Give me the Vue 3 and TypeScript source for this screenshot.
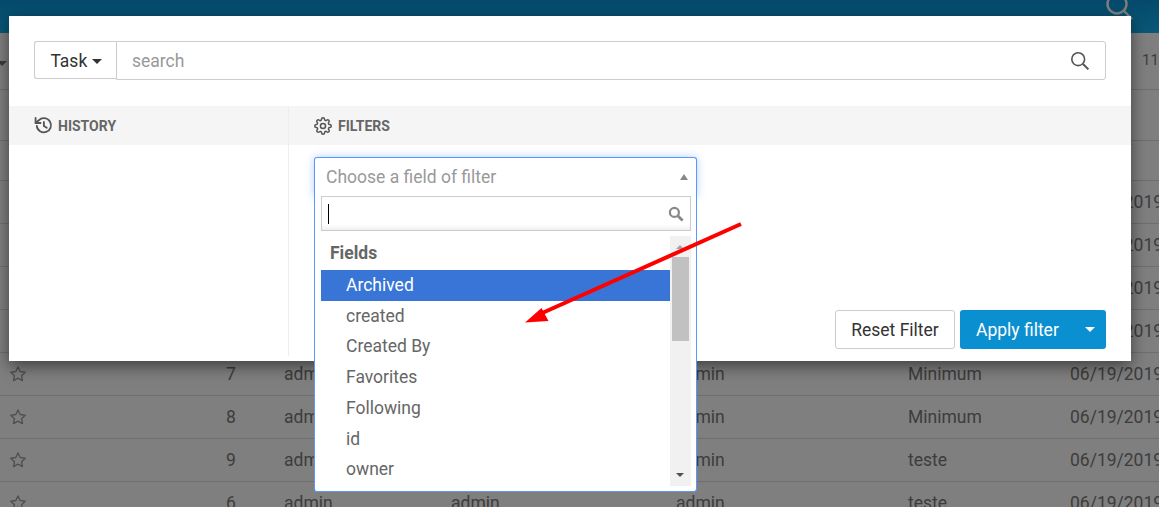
<script setup lang="ts">
interface Row { id: string; a: string; b: string; c: string; p: string; d: string }
const rows: Row[] = [
  { id: '3', a: 'admin', b: 'admin', c: 'admin', p: 'Minimum', d: '06/19/2019' },
  { id: '4', a: 'admin', b: 'admin', c: 'admin', p: 'Minimum', d: '06/19/2019' },
  { id: '5', a: 'admin', b: 'admin', c: 'admin', p: 'Minimum', d: '06/19/2019' },
  { id: '10', a: 'admin', b: 'admin', c: 'admin', p: 'Minimum', d: '06/19/2019' },
  { id: '7', a: 'admin', b: 'admin', c: 'admin', p: 'Minimum', d: '06/19/2019' },
  { id: '8', a: 'admin', b: 'admin', c: 'admin', p: 'Minimum', d: '06/19/2019' },
  { id: '9', a: 'admin', b: 'admin', c: 'admin', p: 'teste', d: '06/19/2019' },
  { id: '6', a: 'admin', b: 'admin', c: 'admin', p: 'teste', d: '06/19/2019' },
]
const fields: string[] = ['created', 'Created By', 'Favorites', 'Following', 'id', 'owner']
</script>

<template>
  <div class="page">
    <header class="topbar">
      <svg class="top-search" width="30" height="30" viewBox="0 0 30 30" fill="none" stroke="#fff" stroke-width="2.4">
        <circle cx="11" cy="11" r="9.5" />
        <path d="M18 18l8 8" />
      </svg>
    </header>
    <div class="toolbar">
      <i class="tool-caret"></i>
      <span class="count">11</span>
    </div>
    <div class="colhead"></div>
    <div class="colhead short"></div>
    <div v-for="r in rows" :key="r.id" class="row">
      <svg class="star" width="18" height="18" viewBox="0 0 24 24" fill="none" stroke="#a0a0a0" stroke-width="1.9" stroke-linejoin="round">
        <path d="M12 2.6l2.9 6.1 6.700.9-4.900 4.600 1.200 6.600-5.900-3.200-5.900 3.200 1.200-6.600-4.900-4.600 6.700-.9z" />
      </svg>
      <span class="c-id">{{ r.id }}</span>
      <span>{{ r.a }}</span>
      <span>{{ r.b }}</span>
      <span>{{ r.c }}</span>
      <span>{{ r.p }}</span>
      <span class="c-d">{{ r.d }}</span>
    </div>

    <div class="backdrop"></div>

    <section class="modal">
      <div class="search-group">
        <button class="type-btn">Task <i class="caret"></i></button>
        <div class="search-input">
          <span class="ph">search</span>
          <svg width="20" height="20" viewBox="0 0 20 20" fill="none" stroke="#555" stroke-width="1.6">
            <circle cx="8.200" cy="8.200" r="6.400" />
            <path d="M13 13l5.400 5.400" stroke-width="2" />
          </svg>
        </div>
      </div>
      <div class="panels">
        <div class="history">
          <h3 class="panel-title">
            <svg width="19" height="19" viewBox="0 0 24 24" fill="none" stroke="#555" stroke-width="2.300" stroke-linecap="round">
              <path d="M3.500 12.500A9 9 0 1 0 6 5.400L2.500 8.500" />
              <path d="M2 2.500v6.300h6.300" />
              <path d="M12.500 7.500v5.200l3.600 2.100" />
            </svg>
            HISTORY
          </h3>
        </div>
        <div class="filters">
          <h3 class="panel-title">
            <svg width="18" height="18" viewBox="0 0 24 24" fill="none" stroke="#555" stroke-width="2">
              <circle cx="12" cy="12" r="3.400" />
              <path d="M19.400 15a1.650 1.650 0 0 0 .33 1.820l.06.06a2 2 0 0 1 0 2.830 2 2 0 0 1-2.830 0l-.06-.06a1.650 1.650 0 0 0-1.820-.33 1.650 1.650 0 0 0-1 1.510V21a2 2 0 0 1-2 2 2 2 0 0 1-2-2v-.09A1.650 1.650 0 0 0 9 19.400a1.650 1.650 0 0 0-1.820.33l-.06.06a2 2 0 0 1-2.830 0 2 2 0 0 1 0-2.830l.06-.06a1.650 1.650 0 0 0 .33-1.820 1.650 1.650 0 0 0-1.510-1H3a2 2 0 0 1-2-2 2 2 0 0 1 2-2h.09A1.650 1.650 0 0 0 4.600 9a1.650 1.650 0 0 0-.33-1.820l-.06-.06a2 2 0 0 1 0-2.830 2 2 0 0 1 2.830 0l.06.06a1.650 1.650 0 0 0 1.820.33H9a1.650 1.650 0 0 0 1-1.510V3a2 2 0 0 1 2-2 2 2 0 0 1 2 2v.09a1.650 1.650 0 0 0 1 1.510 1.650 1.650 0 0 0 1.820-.33l.06-.06a2 2 0 0 1 2.830 0 2 2 0 0 1 0 2.830l-.06.06a1.650 1.650 0 0 0-.33 1.820V9a1.650 1.650 0 0 0 1.510 1H21a2 2 0 0 1 2 2 2 2 0 0 1-2 2h-.09a1.650 1.650 0 0 0-1.510 1z" />
            </svg>
            FILTERS
          </h3>
          <div class="filter-body">
            <div class="select">
              <div class="select-head">
                <span>Choose a field of filter</span>
                <i class="up"></i>
              </div>
              <div class="drop">
                <div class="drop-search">
                  <i class="cursor"></i>
                  <svg width="16" height="16" viewBox="0 0 16 16" fill="none" stroke="#888" stroke-width="2.200">
                    <circle cx="6.400" cy="6.400" r="4.500" />
                    <path d="M10 10l4.600 4.600" stroke-width="2.800" />
                  </svg>
                </div>
                <div class="list-wrap">
                  <div class="list">
                    <div class="group">Fields</div>
                    <div class="opt active">Archived</div>
                    <div v-for="f in fields" :key="f" class="opt">{{ f }}</div>
                  </div>
                  <div class="scroll">
                    <i class="sb-up"></i>
                    <div class="thumb"></div>
                    <i class="sb-down"></i>
                  </div>
                </div>
              </div>
            </div>
            <div class="actions">
              <button class="reset">Reset Filter</button>
              <button class="apply"><span>Apply filter</span><i class="caret white"></i></button>
            </div>
          </div>
        </div>
      </div>
    </section>

    <svg class="arrow" width="1159" height="507" viewBox="0 0 1159 507">
      <path d="M741 224L540 314" stroke="#f00" stroke-width="4" fill="none" />
      <path d="M525 322.500L541.500 308 548.500 321z" fill="#f00" />
    </svg>
  </div>
</template>

<style>
html, body { margin: 0; overflow: hidden; }
</style>

<style scoped>
.page {
  position: relative;
  width: 1159px;
  height: 507px;
  overflow: hidden;
  background: #fff;
  font-family: Roboto, "Liberation Sans", sans-serif;
  font-size: 17.5px;
  color: #7a7a7a;
}
.topbar {
  height: 33px;
  background: linear-gradient(#0a94d8, #14b0f0);
  position: relative;
  overflow: hidden;
}
.top-search { position: absolute; left: 1106px; top: -7px; }
.toolbar {
  height: 57px;
  box-sizing: border-box;
  border-bottom: 1px solid #ddd;
  display: flex;
  align-items: center;
  justify-content: space-between;
}
.tool-caret {
  margin-left: -3px;
  margin-top: 5px;
  border-left: 5px solid transparent;
  border-right: 5px solid transparent;
  border-top: 5px solid #777;
}
.count { width: 17px; font-size: 15px; margin-bottom: 2px; white-space: nowrap; }
.colhead { height: 51px; box-sizing: border-box; border-bottom: 1px solid #ddd; }
.colhead.short { height: 40px; }
.row {
  height: 43px;
  box-sizing: border-box;
  border-bottom: 1px solid #ddd;
  display: grid;
  grid-template-columns: 226px 58px 167px 225px 232px 162px 89px;
  align-items: center;
  position: relative;
}
.star { position: absolute; left: 9px; top: 12px; }
.c-id { grid-column: 2; }
.c-d { white-space: nowrap; }
.backdrop { position: absolute; inset: 0; background: rgba(0, 0, 0, .5); }
.modal {
  position: absolute;
  left: 9px;
  top: 16px;
  width: 1122px;
  height: 345px;
  background: #fff;
  box-shadow: 0 5px 15px rgba(0, 0, 0, .5);
  display: flex;
  flex-direction: column;
}
.search-group {
  display: flex;
  height: 39px;
  margin: 25px 25px 26px 25px;
}
.type-btn {
  width: 82px;
  box-sizing: border-box;
  background: #fff;
  border: 1px solid #ccc;
  border-right: 0;
  border-radius: 3px 0 0 3px;
  font: inherit;
  color: #333;
  padding: 1px 0 0 1px;
  height: 38px;
}
.caret {
  display: inline-block;
  width: 0;
  height: 0;
  border-left: 5px solid transparent;
  border-right: 5px solid transparent;
  border-top: 5px solid #333;
  vertical-align: middle;
}
.caret.white { border-top-color: #fff; }
.search-input {
  flex: 1;
  border: 1px solid #ccc;
  border-radius: 0 3px 3px 0;
  display: flex;
  align-items: center;
  justify-content: space-between;
  padding: 0 15px;
}
.ph { color: #999; }
.panels { flex: 1; display: flex; min-height: 0; margin-bottom: 5px; }
.history { width: 280px; box-sizing: border-box; border-right: 1px solid #eee; }
.filters { flex: 1; display: flex; flex-direction: column; }
.panel-title {
  margin: 0;
  height: 39px;
  background: #f5f5f5;
  display: flex;
  align-items: center;
  gap: 5px;
  font-size: 14px;
  font-weight: 700;
  color: #666;
  padding-left: 25px;
}
.filters .panel-title { padding-left: 25px; gap: 6px; }
.filter-body {
  flex: 1;
  display: flex;
  flex-direction: column;
  justify-content: space-between;
  padding: 12px 25px 7px 25px;
}
.select { width: 383px; position: relative; }
.select-head {
  height: 40px;
  box-sizing: border-box;
  border: 1px solid #5897fb;
  border-bottom: 0;
  border-radius: 3px 3px 0 0;
  box-shadow: 0 0 8px rgba(88, 151, 251, .45);
  background: #fff;
  display: flex;
  align-items: center;
  justify-content: space-between;
  padding: 0 8px 2px 11px;
  color: #999;
}
.up {
  border-left: 4px solid transparent;
  border-right: 4px solid transparent;
  border-bottom: 6px solid #888;
  width: 0;
  height: 0;
}
.drop {
  position: absolute;
  left: 0;
  right: 0;
  top: 39px;
  height: 296px;
  box-sizing: border-box;
  background: #fff;
  border: 1px solid #5897fb;
  border-top: 0;
  padding: 0 5px 0 6px;
  border-radius: 0 0 3px 3px;
}
.drop-search {
  height: 35px;
  box-sizing: border-box;
  border: 1px solid #ccc;
  background: linear-gradient(#fff 85%, #eee);
  display: flex;
  align-items: center;
  justify-content: space-between;
  padding: 0 6px;
}
.cursor { width: 1px; height: 20px; background: #000; }
.list-wrap { display: flex; margin-top: 5px; height: 250px; }
.list { flex: 1; color: #666; }
.group { font-weight: 700; height: 34px; line-height: 34px; padding-left: 9px; }
.opt { height: 30.7px; line-height: 30.7px; padding-left: 25px; }
.opt.active { height: 30.75px; background: #3875d7; color: #fff; }
.scroll {
  width: 21px;
  background: #f1f1f1;
  display: flex;
  flex-direction: column;
  align-items: center;
  position: relative;
}
.thumb { width: 17px; height: 84px; margin-top: 21px; background: #c1c1c1; }
.sb-up {
  position: absolute;
  top: 9px;
  left: 6px;
  border-left: 4px solid transparent;
  border-right: 4px solid transparent;
  border-bottom: 4px solid #a3a3a3;
}
.sb-down {
  position: absolute;
  bottom: 9px;
  left: 6px;
  border-left: 4px solid transparent;
  border-right: 4px solid transparent;
  border-top: 4px solid #505050;
}
.actions { display: flex; justify-content: flex-end; gap: 5px; }
.actions button { height: 39px; font: inherit; border-radius: 3px; box-sizing: border-box; }
.reset { width: 120px; background: #fff; border: 1px solid #ccc; color: #333; padding: 0; }
.apply {
  width: 146px;
  background: #0a8fd0;
  border: 0;
  color: #fff;
  display: flex;
  align-items: center;
  justify-content: space-between;
  padding: 0 11px 0 16px;
}
.arrow { position: absolute; left: 0; top: 0; pointer-events: none; }
</style>
